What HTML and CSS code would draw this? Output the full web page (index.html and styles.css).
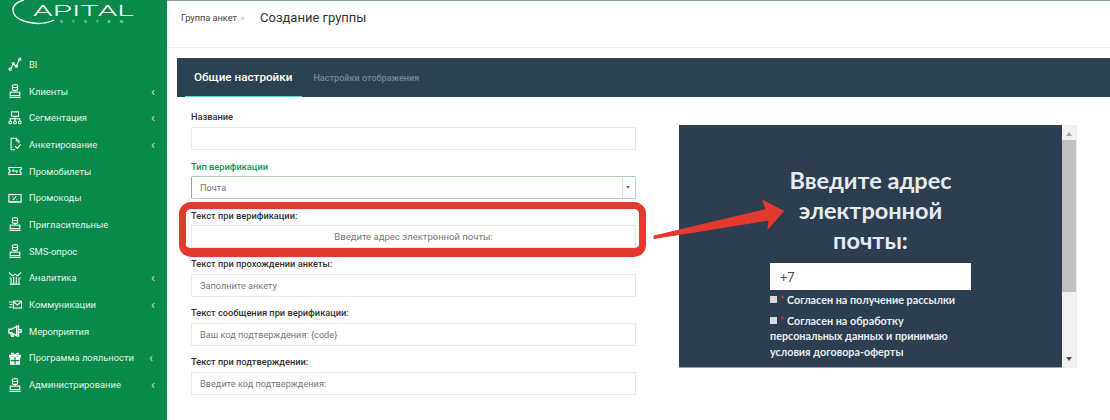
FILE: index.html
```html
<!DOCTYPE html>
<html lang="en">
<head>
    <meta charset="UTF-8">
    <meta name="viewport" content="width=device-width, initial-scale=1.0">
    <title>Создание группы</title>
    <link rel="stylesheet" href="styles.css">
</head>
<body>
    <svg class="icon-defs" width="0" height="0">
        <symbol id="i-person" viewBox="0 0 16 16">
            <rect x="5" y="0.800" width="6" height="6.500" rx="1.500"/>
            <path d="M5 4h6M8 7.300v2"/>
            <rect x="2.500" y="9.300" width="11" height="4"/>
            <path d="M1.500 15.300h13"/>
        </symbol>
    </svg>

    <aside class="sidebar">
        <div class="logo">
            <svg width="150" height="30" viewBox="0 0 150 30">
                <path class="logo-arc" d="M24 0C16 2 12.500 6 13 11C14 18 24 23 38 23.500C45 23.500 50 22 54 20"/>
                <text class="logo-name" x="33" y="15.500" textLength="101" lengthAdjust="spacingAndGlyphs">APITAL</text>
                <text class="logo-sub" x="60" y="22.500" textLength="63">SYSTEM</text>
            </svg>
        </div>
        <nav class="menu">
            <a href="#" class="menu-item">
                <svg class="menu-icon" viewBox="0 0 16 16"><path d="M3 13.500L6 8l3.500 2.500L13 3"/><circle cx="2.500" cy="14" r="1.300"/><circle cx="6" cy="7.500" r="1.300"/><circle cx="9.500" cy="10.500" r="1.300"/><circle cx="13.500" cy="2.500" r="1.300"/></svg>
                <span>BI</span>
            </a>
            <a href="#" class="menu-item">
                <svg class="menu-icon"><use href="#i-person"/></svg>
                <span>Клиенты</span><i class="caret">‹</i>
            </a>
            <a href="#" class="menu-item">
                <svg class="menu-icon" viewBox="0 0 16 16"><rect x="4" y="1" width="8" height="5"/><path d="M8 6v3M2.500 11V8.800h11V11M8 9v2"/><circle cx="2.500" cy="13" r="1.600"/><circle cx="8" cy="13" r="1.600"/><circle cx="13.500" cy="13" r="1.600"/></svg>
                <span>Сегментация</span><i class="caret">‹</i>
            </a>
            <a href="#" class="menu-item">
                <svg class="menu-icon" viewBox="0 0 16 16"><path d="M12.500 7V4.500L9.500 1.500H3.500V14.500H8"/><path d="M9.500 1.500V4.500H12.500"/><path d="M8 10.500l2.500 2.500 4-4.500"/></svg>
                <span>Анкетирование</span><i class="caret">‹</i>
            </a>
            <a href="#" class="menu-item">
                <svg class="menu-icon" viewBox="0 0 16 16"><path d="M1 4h14v2.500a1.500 1.500 0 0 0 0 3V12H1V9.500a1.500 1.500 0 0 0 0-3z"/><path d="M4.500 8h7M5.500 6l1 1M9.500 9l1 1"/></svg>
                <span>Промобилеты</span>
            </a>
            <a href="#" class="menu-item">
                <svg class="menu-icon" viewBox="0 0 16 16"><rect x="1" y="4" width="14" height="8.500"/><path d="M5.500 10.500l4-4.500M5 6.500h1M9.500 10h1M1 12.500h14"/></svg>
                <span>Промокоды</span>
            </a>
            <a href="#" class="menu-item">
                <svg class="menu-icon"><use href="#i-person"/></svg>
                <span>Пригласительные</span>
            </a>
            <a href="#" class="menu-item">
                <svg class="menu-icon"><use href="#i-person"/></svg>
                <span>SMS-опрос</span>
            </a>
            <a href="#" class="menu-item">
                <svg class="menu-icon" viewBox="0 0 16 16"><path d="M1 1.500l4 4 3-2 3 2 4-4M2 15h12M3.500 14V7.500M6.500 14V6.500M9.500 14V6.500M12.500 14V7.500M1.500 8h1M13.500 8h1"/></svg>
                <span>Аналитика</span><i class="caret">‹</i>
            </a>
            <a href="#" class="menu-item">
                <svg class="menu-icon" viewBox="0 0 16 16"><rect x="6" y="3.500" width="9.500" height="8"/><path d="M6 4l4.700 4L15.500 4M1 4.500h3.500M2 7.500h2.500M1 10.500h3.500"/></svg>
                <span>Коммуникации</span><i class="caret">‹</i>
            </a>
            <a href="#" class="menu-item">
                <svg class="menu-icon menu-icon-bold" viewBox="0 0 16 16"><path d="M1 6v4h3l6 3.500v-11L4 6zM3 10l1 4h2l-.800-3.500M12 1.500v13M12.500 6.500h2.500v3h-2.500"/></svg>
                <span>Мероприятия</span>
            </a>
            <a href="#" class="menu-item menu-item-wide">
                <svg class="menu-icon menu-icon-bold" viewBox="0 0 16 16"><path fill="#fff" d="M3 7h10v8H3z"/><path d="M2 5h12v2H2zM8 5v10M8 5C5 1.500 3.500 2 4.500 4M8 5c3-3.500 4.500-3 3.500-1"/><path stroke="#0a8a4a" d="M3 11h10M8 7v8"/></svg>
                <span>Программа лояльности</span><i class="caret">‹</i>
            </a>
            <a href="#" class="menu-item">
                <svg class="menu-icon"><use href="#i-person"/></svg>
                <span>Администрирование</span><i class="caret">‹</i>
            </a>
        </nav>
    </aside>

    <div class="content">
        <header class="page-head">
            <span class="crumb">Группа анкет <em>»</em></span>
            <h1>Создание группы</h1>
        </header>

        <div class="tabs">
            <a href="#" class="tab active">Общие настройки</a>
            <a href="#" class="tab">Настройки отображения</a>
        </div>

        <div class="settings">
            <form class="form">
                <div class="field">
                    <label>Название</label>
                    <div class="input"></div>
                </div>
                <div class="field field-ok">
                    <label>Тип верификации</label>
                    <div class="input select">Почта<b class="select-btn"></b></div>
                </div>
                <div class="field field-marked">
                    <label>Текст при верификации:</label>
                    <div class="input input-center">Введите адрес электронной почты:</div>
                </div>
                <div class="field">
                    <label>Текст при прохождении анкеты:</label>
                    <div class="input">Заполните анкету</div>
                </div>
                <div class="field">
                    <label>Текст сообщения при верификации:</label>
                    <div class="input">Ваш код подтверждения: {code}</div>
                </div>
                <div class="field">
                    <label>Текст при подтверждении:</label>
                    <div class="input">Введите код подтверждения:</div>
                </div>
            </form>

            <section class="preview">
                <div class="preview-body">
                    <div class="preview-col">
                        <h2>Введите адрес электронной почты:</h2>
                        <div class="preview-input">+7</div>
                        <p class="agree"><i class="box"></i><i class="star">*</i>Согласен на получение рассылки</p>
                        <p class="agree agree-long"><i class="box"></i><i class="star">*</i>Согласен на обработку персональных данных и принимаю условия договора-оферты</p>
                    </div>
                </div>
                <div class="scrollbar">
                    <span class="arrow-up"></span>
                    <span class="thumb"></span>
                    <span class="arrow-down"></span>
                </div>
            </section>
        </div>
    </div>

    <svg class="annotation" width="1110" height="420" viewBox="0 0 1110 420">
        <path d="M654 236L766 209.500L763 200.500L783.500 211L768 229L769 220L654 238.500z"/>
    </svg>
</body>
</html>
```

FILE: styles.css
```css
:root {
    --green: #0a8a4a;
    --slate: #2b4350;
    --navy: #2c3e50;
    --red: #e3392f;
    --line: #e6e8ea;
}
html, body {
    height: 100%;
}
body {
    margin: 0;
    display: flex;
    position: relative;
    overflow: hidden;
    font-family: Roboto, "Liberation Sans", sans-serif;
    background-color: #fff;
    color: #333;
}
a {
    text-decoration: none;
}
.icon-defs {
    position: absolute;
}
.sidebar {
    flex: 0 0 167px;
    background-color: var(--green);
}
.logo {
    height: 51px;
}
.logo-arc {
    fill: none;
    stroke: #fff;
    stroke-width: 1.300;
}
.logo-name {
    fill: #fff;
    font-family: Roboto, sans-serif;
    font-size: 14.500px;
    font-weight: 300;
}
.logo-sub {
    fill: #dcefe4;
    font-family: "Liberation Sans", sans-serif;
    font-size: 4px;
}
.menu-item {
    display: flex;
    align-items: center;
    height: 26.700px;
    padding: 0 11px 0 8px;
    color: #e4f3ea;
    font-size: 9.400px;
}
.menu-item span {
    flex: 1;
    margin-left: 7px;
    white-space: nowrap;
}
.menu-icon {
    flex: 0 0 14px;
    width: 14px;
    height: 14px;
    fill: none;
    stroke: #fff;
    stroke-width: 1.200;
}
.menu-icon-bold {
    stroke-width: 1.500;
}
.caret {
    font-style: normal;
    font-size: 13px;
    line-height: 1;
    margin-right: 1px;
    color: #d5ebde;
}
.menu-item-wide .caret {
    margin-right: 3px;
}
.content {
    flex: 1;
    min-width: 0;
}
.page-head {
    display: flex;
    align-items: center;
    height: 33px;
    padding: 0 0 13px 14px;
    border-top: 1px solid #7fa59a;
    border-bottom: 1px solid #eeeeee;
}
.crumb {
    width: 79px;
    font-size: 9.200px;
    color: #444;
}
.crumb em {
    font-style: normal;
    color: #bbb;
    margin-left: 1px;
}
h1 {
    margin: 0;
    font-size: 13px;
    font-weight: 400;
    color: #333;
}
.tabs {
    display: flex;
    align-items: stretch;
    height: 39px;
    margin: 10px 0 0 10px;
    background-color: var(--slate);
}
.tab {
    display: flex;
    align-items: center;
    color: #75888f;
    font-size: 9.100px;
    font-weight: 500;
}
.tab.active {
    margin: 0 11px 0 8px;
    padding: 0 10px 0 9px;
    color: #fff;
    font-size: 11.700px;
    border-bottom: 1px solid #5fd8c6;
}
.settings {
    display: flex;
    padding: 13px 0 0 24px;
}
.form {
    flex: 0 0 445px;
}
.field {
    position: relative;
    height: 49px;
}
.field label {
    display: block;
    height: 17px;
    line-height: 14px;
    font-size: 9.250px;
    font-weight: 500;
    color: #333;
}
.field-ok label {
    line-height: 16px;
    color: #14934f;
}
.field-marked label {
    line-height: 16px;
}
.field-marked::after {
    content: "";
    position: absolute;
    top: -6px;
    left: -12px;
    right: -10px;
    bottom: 0;
    border: 7px solid var(--red);
    border-bottom-width: 9px;
    border-radius: 12px;
}
.input {
    box-sizing: border-box;
    position: relative;
    height: 23px;
    padding: 0 8px;
    line-height: 21px;
    font-size: 9.200px;
    color: #777;
    background-color: #fff;
    border: 1px solid var(--line);
}
.input-center {
    text-align: center;
    font-size: 9.500px;
}
.select {
    border-color: #a9cfb2 #c4c9c6 #c4c9c6 #9aa09c;
    border-radius: 2px;
}
.select-btn {
    position: absolute;
    top: 0;
    right: 0;
    bottom: 0;
    width: 12px;
    border-left: 1px solid #dddddd;
}
.select-btn::after {
    content: "";
    position: absolute;
    top: 9px;
    left: 3px;
    border: 2.500px solid transparent;
    border-top: 3px solid #777;
}
.preview {
    display: flex;
    flex: 0 0 398px;
    height: 243px;
    margin: 15px 0 0 43px;
}
.preview-body {
    flex: 1;
    overflow: hidden;
    background-color: var(--navy);
    border-bottom: 1px solid #9aa3ab;
}
.preview-col {
    width: 201px;
    margin: 0 auto;
    padding-top: 40px;
    font-family: Lato, "Open Sans", sans-serif;
}
.preview-col h2 {
    margin: 0 0 8px;
    font-size: 23.500px;
    font-weight: 700;
    line-height: 30px;
    text-align: center;
    color: #e6ebef;
}
.preview-input {
    box-sizing: border-box;
    height: 27px;
    padding: 0 10px;
    line-height: 29px;
    font-size: 12.500px;
    color: #444;
    background-color: #fff;
}
.agree {
    margin: 2px 0 0;
    font-size: 10.800px;
    font-weight: 700;
    line-height: 15.500px;
    color: #e9edf0;
    white-space: nowrap;
}
.agree-long {
    margin-top: 5px;
    white-space: normal;
}
.box {
    display: inline-block;
    width: 7px;
    height: 7px;
    margin: 0 0 3px;
    vertical-align: middle;
    background-color: #d8d8d8;
}
.star {
    display: inline-block;
    width: 10px;
    text-align: center;
    font-style: normal;
    color: #c0392b;
}
.scrollbar {
    position: relative;
    flex: 0 0 15px;
    background-color: #f1f1f1;
}
.thumb {
    position: absolute;
    top: 15px;
    left: 0;
    right: 1px;
    height: 152px;
    background-color: #c1c1c1;
}
.arrow-up, .arrow-down {
    position: absolute;
    left: 4px;
    border: 3px solid transparent;
}
.arrow-up {
    top: 4px;
    border-bottom: 4px solid #a3a3a3;
}
.arrow-down {
    bottom: 4px;
    border-top: 4px solid #505050;
}
.annotation {
    position: absolute;
    top: 0;
    left: 0;
    pointer-events: none;
}
.annotation path {
    fill: var(--red);
    stroke: var(--red);
    stroke-width: 1;
    stroke-linejoin: round;
}
```
